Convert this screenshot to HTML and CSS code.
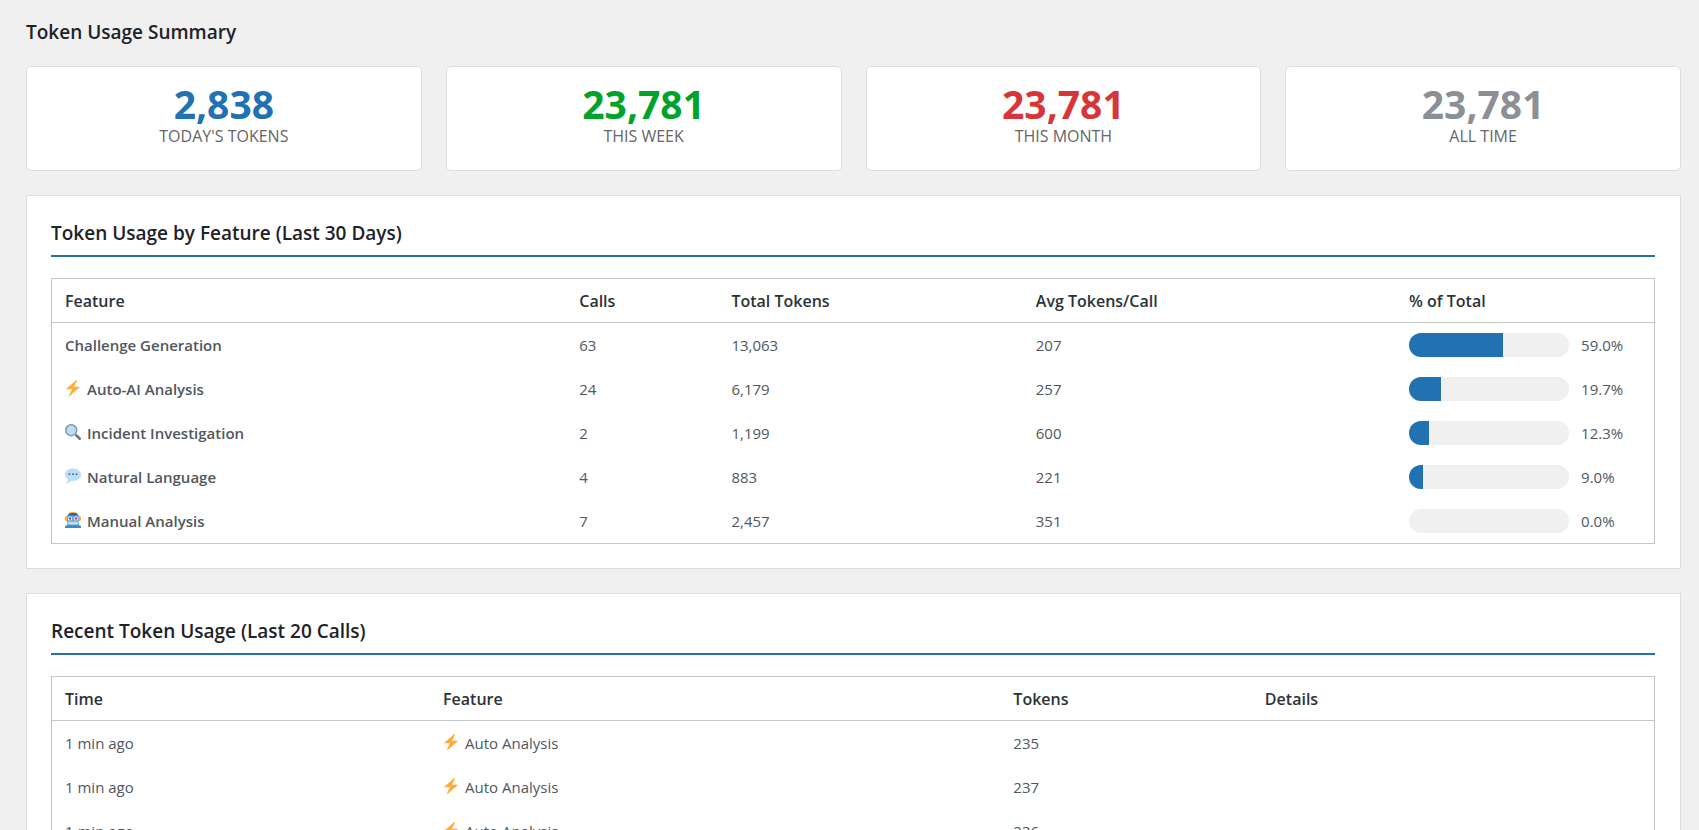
FILE: index.html
```html
<!DOCTYPE html>
<html lang="en">
<head>
    <meta charset="UTF-8">
    <meta name="viewport" content="width=device-width, initial-scale=1.0">
    <title>Token Usage</title>
    <link rel="stylesheet" href="styles.css">
</head>
<body>
    <!-- Emoji icons, used in the tables below -->
    <svg class="icon-defs" aria-hidden="true">
        <symbol id="icon-bolt" viewBox="0 0 36 36">
            <path fill="#ffac33" d="M32.938 15.651C32.792 15.26 32.418 15 32 15H19.925L26.89 1.458c.219-.426.106-.947-.271-1.243C26.437.071 26.218 0 26 0c-.233 0-.466.082-.653.243L18 6.588 3.347 19.243c-.316.273-.43.714-.284 1.105S3.582 21 4 21h12.075L9.11 34.542c-.219.426-.106.947.271 1.243.182.144.401.215.619.215.233 0 .466-.082.653-.243L18 29.412l14.653-12.655c.317-.273.43-.714.285-1.106z"/>
        </symbol>
        <symbol id="icon-search" viewBox="0 0 36 36">
            <path stroke="#9aaab4" stroke-width="4" d="M21 21l5 5"/>
            <path stroke="#66757f" stroke-width="6" stroke-linecap="round" d="M26 26l7 7"/>
            <circle fill="#8899a6" cx="14" cy="14" r="14"/>
            <circle fill="#bbddf5" cx="14" cy="14" r="10.5"/>
        </symbol>
        <symbol id="icon-chat" viewBox="0 0 36 36">
            <path fill="#bdddf4" d="M18 1C8.059 1 0 7.268 0 15c0 4.368 2.574 8.268 6.604 10.835C6.08 28.144 4.859 31.569 2 35c5.758-.96 9.439-3.761 11.716-6.416 1.376.262 2.805.416 4.284.416 9.941 0 18-6.268 18-14S27.941 1 18 1z"/>
            <circle fill="#2a6797" cx="10" cy="14" r="2"/>
            <circle fill="#2a6797" cx="18" cy="14" r="2"/>
            <circle fill="#2a6797" cx="26" cy="14" r="2"/>
        </symbol>
        <symbol id="icon-robot" viewBox="0 0 36 36">
            <ellipse fill="#f4900c" cx="33.5" cy="14.5" rx="2.5" ry="3.5"/>
            <ellipse fill="#f4900c" cx="2.5" cy="14.5" rx="2.5" ry="3.5"/>
            <rect fill="#ffac33" x="1" y="9" width="5" height="11" rx="1"/>
            <rect fill="#ffac33" x="30" y="9" width="5" height="11" rx="1"/>
            <ellipse fill="#ffac33" cx="18" cy="3" rx="9" ry="3"/>
            <path fill="#55acee" d="M5 10c0-4 2-6 5-6h16c3 0 5 2 5 6v22H5z"/>
            <path fill="#226699" d="M28 5c0-1.5-4-3-10-3S8 3.500 8 5l-1 3h22z"/>
            <path fill="#3b88c3" d="M0 36v-2c0-2 2-4 5-4h26c3 0 5 2 5 4v2z"/>
            <circle fill="#fff" cx="24.5" cy="14.5" r="4.5"/>
            <circle fill="#dd2e44" cx="24.5" cy="14.5" r="2.7"/>
            <circle fill="#fff" cx="11.5" cy="14.5" r="4.5"/>
            <circle fill="#dd2e44" cx="11.5" cy="14.5" r="2.7"/>
            <rect fill="#e1e8ed" x="7" y="22" width="22" height="6" rx="3"/>
            <path stroke="#99aab5" d="M12 22v6M16 22v6M20 22v6M24 22v6"/>
        </symbol>
    </svg>

    <div class="container">
        <h2 class="page-title">Token Usage Summary</h2>

        <div class="stats">
            <div class="stat-card">
                <div class="stat-number blue">2,838</div>
                <div class="stat-label">Today's Tokens</div>
            </div>
            <div class="stat-card">
                <div class="stat-number green">23,781</div>
                <div class="stat-label">This Week</div>
            </div>
            <div class="stat-card">
                <div class="stat-number red">23,781</div>
                <div class="stat-label">This Month</div>
            </div>
            <div class="stat-card">
                <div class="stat-number gray">23,781</div>
                <div class="stat-label">All Time</div>
            </div>
        </div>

        <div class="panel">
            <h2>Token Usage by Feature (Last 30 Days)</h2>
            <table class="feature-table">
                <thead>
                    <tr>
                        <th>Feature</th>
                        <th>Calls</th>
                        <th>Total Tokens</th>
                        <th>Avg Tokens/Call</th>
                        <th>% of Total</th>
                    </tr>
                </thead>
                <tbody>
                    <tr>
                        <td><strong>Challenge Generation</strong></td>
                        <td>63</td>
                        <td>13,063</td>
                        <td>207</td>
                        <td>
                            <div class="usage">
                                <div class="bar"><div class="bar-fill" style="width: 59%"></div></div>
                                <span>59.0%</span>
                            </div>
                        </td>
                    </tr>
                    <tr>
                        <td><strong><svg class="emoji"><use href="#icon-bolt"/></svg>Auto-AI Analysis</strong></td>
                        <td>24</td>
                        <td>6,179</td>
                        <td>257</td>
                        <td>
                            <div class="usage">
                                <div class="bar"><div class="bar-fill" style="width: 19.7%"></div></div>
                                <span>19.7%</span>
                            </div>
                        </td>
                    </tr>
                    <tr>
                        <td><strong><svg class="emoji"><use href="#icon-search"/></svg>Incident Investigation</strong></td>
                        <td>2</td>
                        <td>1,199</td>
                        <td>600</td>
                        <td>
                            <div class="usage">
                                <div class="bar"><div class="bar-fill" style="width: 12.3%"></div></div>
                                <span>12.3%</span>
                            </div>
                        </td>
                    </tr>
                    <tr>
                        <td><strong><svg class="emoji"><use href="#icon-chat"/></svg>Natural Language</strong></td>
                        <td>4</td>
                        <td>883</td>
                        <td>221</td>
                        <td>
                            <div class="usage">
                                <div class="bar"><div class="bar-fill" style="width: 9%"></div></div>
                                <span>9.0%</span>
                            </div>
                        </td>
                    </tr>
                    <tr>
                        <td><strong><svg class="emoji"><use href="#icon-robot"/></svg>Manual Analysis</strong></td>
                        <td>7</td>
                        <td>2,457</td>
                        <td>351</td>
                        <td>
                            <div class="usage">
                                <div class="bar"><div class="bar-fill" style="width: 0%"></div></div>
                                <span>0.0%</span>
                            </div>
                        </td>
                    </tr>
                </tbody>
            </table>
        </div>

        <div class="panel">
            <h2>Recent Token Usage (Last 20 Calls)</h2>
            <table class="recent-table">
                <thead>
                    <tr>
                        <th>Time</th>
                        <th>Feature</th>
                        <th>Tokens</th>
                        <th>Details</th>
                    </tr>
                </thead>
                <tbody>
                    <tr>
                        <td>1 min ago</td>
                        <td><svg class="emoji"><use href="#icon-bolt"/></svg>Auto Analysis</td>
                        <td>235</td>
                        <td></td>
                    </tr>
                    <tr>
                        <td>1 min ago</td>
                        <td><svg class="emoji"><use href="#icon-bolt"/></svg>Auto Analysis</td>
                        <td>237</td>
                        <td></td>
                    </tr>
                    <tr>
                        <td>1 min ago</td>
                        <td><svg class="emoji"><use href="#icon-bolt"/></svg>Auto Analysis</td>
                        <td>236</td>
                        <td></td>
                    </tr>
                </tbody>
            </table>
        </div>
    </div>
</body>
</html>
```
FILE: styles.css
```css
* {
    box-sizing: border-box;
}

body {
    margin: 0;
    background-color: #f0f0f0;
    color: #50575e;
    font-family: "Segoe UI", "Open Sans", "Noto Sans", sans-serif;
    font-size: 15px;
    line-height: 24px;
}

.icon-defs {
    display: none;
}

.container {
    padding: 18px 18px 0 26px;
}

h2 {
    margin: 0;
    color: #1d2327;
    font-size: 19px;
    font-weight: 600;
    line-height: 28px;
}

/* Summary cards */
.stats {
    display: grid;
    grid-template-columns: repeat(4, 1fr);
    gap: 24px;
    margin: 20px 0 24px;
}

.stat-card {
    padding: 16px 20px 23px;
    background-color: #fff;
    border: 1px solid #ddd;
    border-radius: 5px;
    text-align: center;
}

.stat-number {
    font-size: 39px;
    font-weight: bold;
    line-height: 42px;
}

.stat-label {
    color: #666;
    font-size: 16px;
    line-height: 22px;
    text-transform: uppercase;
}

.blue {
    color: #2271b1;
}

.green {
    color: #00a32a;
}

.red {
    color: #d63638;
}

.gray {
    color: #8c8f94;
}

/* Panels */
.panel {
    margin-bottom: 24px;
    padding: 23px 25px 24px 24px;
    background-color: #fff;
    border: 1px solid #ddd;
}

.panel h2 {
    margin-bottom: 21px;
    padding-bottom: 8px;
    border-bottom: 2px solid #2271b1;
}

/* Tables */
table {
    width: 100%;
    table-layout: fixed;
    border: 1px solid #c3c4c7;
    border-spacing: 0;
}

th {
    height: 44px;
    padding: 0 13px;
    border-bottom: 1px solid #c3c4c7;
    color: #2c3338;
    font-size: 16px;
    font-weight: 600;
    text-align: left;
}

td {
    height: 44px;
    padding: 0 13px;
}

td strong {
    font-weight: 600;
}

.feature-table th:nth-child(1) {
    width: 32.1%;
}

.feature-table th:nth-child(2) {
    width: 9.5%;
}

.feature-table th:nth-child(3) {
    width: 19%;
}

.feature-table th:nth-child(4) {
    width: 23.3%;
}

.recent-table th:nth-child(1) {
    width: 23.6%;
}

.recent-table th:nth-child(2) {
    width: 35.6%;
}

.recent-table th:nth-child(3) {
    width: 15.7%;
}

.emoji {
    width: 16px;
    height: 16px;
    margin-right: 6px;
    vertical-align: -1px;
}

/* Usage bars */
.usage {
    display: flex;
    align-items: center;
    gap: 12px;
}

.bar {
    width: 160px;
    height: 24px;
    overflow: hidden;
    background-color: #f0f0f0;
    border-radius: 12px;
}

.bar-fill {
    height: 100%;
    background-color: #2271b1;
}
```
